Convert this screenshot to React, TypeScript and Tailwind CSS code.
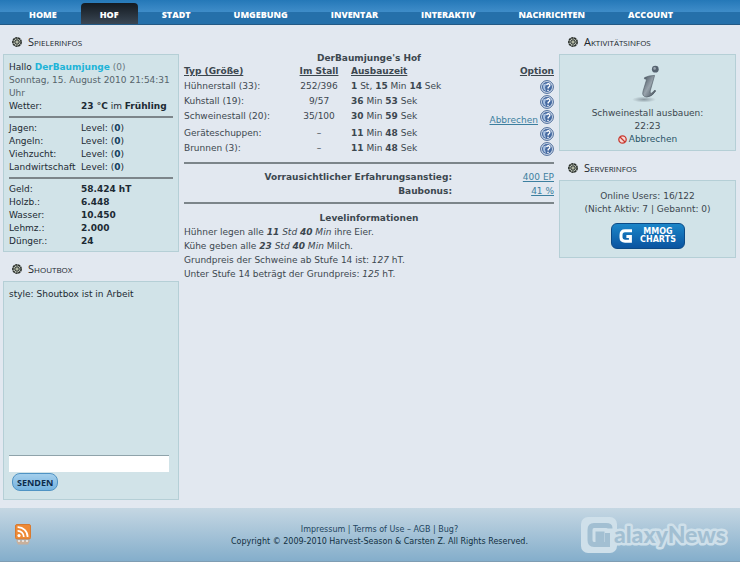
import type { ReactNode } from "react";

const navItems = ["Home", "Hof", "Stadt", "Umgebung", "Inventar", "Interaktiv", "Nachrichten", "Account"];

const stables = [
  { name: "Hühnerstall (33):", stock: "252/396", time: [["1", "St,"], ["15", "Min"], ["14", "Sek"]] },
  { name: "Kuhstall (19):", stock: "9/57", time: [["36", "Min"], ["53", "Sek"]] },
  { name: "Schweinestall (20):", stock: "35/100", time: [["30", "Min"], ["59", "Sek"]], cancel: true },
  { name: "Geräteschuppen:", stock: "–", time: [["11", "Min"], ["48", "Sek"]] },
  { name: "Brunnen (3):", stock: "–", time: [["11", "Min"], ["48", "Sek"]] },
];

const skills = ["Jagen:", "Angeln:", "Viehzucht:", "Landwirtschaft"];

const goods = [
  ["Geld:", "58.424 hT"],
  ["Holzb.:", "6.448"],
  ["Wasser:", "10.450"],
  ["Lehmz.:", "2.000"],
  ["Dünger.:", "24"],
];

function Ornament() {
  return (
    <svg viewBox="0 0 10 10" className="size-[10px]" aria-hidden="true">
      <circle cx="5" cy="5" r="4.2" fill="#c9cfc4" stroke="#2b302b" strokeWidth="1.5" strokeDasharray="2.4 .5" />
      <path d="M5 1v8M1 5h8M2.2 2.2l5.6 5.6M7.8 2.2L2.2 7.8" stroke="#3a403a" strokeWidth=".8" />
      <circle cx="5" cy="5" r="2.2" fill="none" stroke="#3a403a" strokeWidth=".8" />
      <circle cx="5" cy="5" r="1" fill="#d8dcc0" />
    </svg>
  );
}

function PanelTitle({ children }: { children: ReactNode }) {
  return (
    <h2 className="flex h-[29px] items-center gap-[6px] pt-1 pl-[9px] font-['Open_Sans',sans-serif] text-[11px] text-[#20262c] [font-variant:small-caps]">
      <Ornament />
      {children}
    </h2>
  );
}

function HelpIcon() {
  return (
    <svg viewBox="0 0 14 14" className="size-[14px]" aria-hidden="true">
      <circle cx="7" cy="7" r="6.4" fill="#d5e0ee" stroke="#38598c" strokeWidth=".9" />
      <circle cx="7" cy="7" r="5" fill="#4468a0" />
      <path d="M3.4 4.2Q2.4 7 3.8 9.8L6 11 5 7.6 6.4 3.6Z" fill="#a9c1e0" />
      <path d="M6.6 5.2Q7 3.6 8.6 3.8 10.2 4.2 9.8 5.8 9.4 6.8 8.2 7.4V8.6M8 9.8V11" fill="none" stroke="#fff" strokeWidth="1.4" />
    </svg>
  );
}

function InfoIcon() {
  return (
    <svg viewBox="0 0 32 38" className="h-[38px] w-8" role="img" aria-label="Info">
      <defs>
        <linearGradient id="steel" x1="0" y1="0" x2="1" y2="1">
          <stop offset="0" stopColor="#3f4b57" />
          <stop offset=".5" stopColor="#98a3ac" />
          <stop offset="1" stopColor="#3b4652" />
        </linearGradient>
        <radialGradient id="shade">
          <stop offset="0" stopColor="#8d9ba3" />
          <stop offset="1" stopColor="#8d9ba3" stopOpacity="0" />
        </radialGradient>
      </defs>
      <ellipse cx="12" cy="34.5" rx="12" ry="3" fill="url(#shade)" />
      <circle cx="23.3" cy="4.2" r="3.4" fill="#566370" />
      <circle cx="22.6" cy="3.4" r="1.3" fill="#9aa6b0" />
      <path d="M12.6 12.6Q17 10.4 22.6 10.4L18.2 26Q17.6 28.8 19.4 28.2 21.4 27 22.8 25L23.8 26Q20 32 14.8 32 9.6 31.6 11 26.4L14.6 14.4 12.4 13.8Z" fill="url(#steel)" stroke="#4b5762" strokeWidth=".6" />
    </svg>
  );
}

function FeedIcon() {
  return (
    <svg viewBox="0 0 16 22" className="h-[22px] w-4" aria-hidden="true">
      <rect x=".5" y=".5" width="15" height="14.5" rx="1.5" fill="#ee8a35" stroke="#d77a30" />
      <circle cx="4" cy="11.6" r="1.6" fill="#fff" />
      <path d="M2.6 6.8A6 6 0 0 1 8.8 13M2.6 3.2A9.6 9.6 0 0 1 12.6 13" fill="none" stroke="#fff" strokeWidth="1.7" />
      <path d="M1 16.5H15L13 20.5H3Z" fill="#e9a876" opacity=".6" />
      <path d="M3 17h2M7 17h2M11 17h2" stroke="#fff" strokeWidth="1.5" opacity=".8" />
    </svg>
  );
}

function GalaxyNews() {
  return (
    <svg viewBox="0 0 152 38" className="h-[38px] w-[152px]" role="img" aria-label="GalaxyNews">
      <rect x="1" y="1" width="36" height="36" rx="7" fill="#cfe0ea" />
      <g fontFamily="Lato, sans-serif" fontWeight="900" fontSize="23">
        <text x="34" y="27" fill="#a2bfd2" stroke="#cfe0ea" strokeWidth="5" strokeLinejoin="round" paintOrder="stroke">
          alaxyNews
        </text>
      </g>
      <path d="M30 12.5V12Q30 9.5 26 9.5H14Q10 9.5 10 14V24Q10 28.5 14 28.5H18V18H22V28.5H27.5V17" fill="none" stroke="#a2bfd2" strokeWidth="5" />
    </svg>
  );
}

function Rule() {
  return <hr className="h-[2px] border-0 bg-[#7c858a]" />;
}

const panel = "border border-[#b5cfd6] bg-[#d1e3e8]";

export default function App() {
  return (
    <div className="flex min-h-screen flex-col bg-[#e2e8f0] font-['DejaVu_Sans',sans-serif] text-[9px] leading-[13px] text-[#3c474f]">
      <nav className="flex h-[25px] items-end gap-[5px] border-b border-[#225985] bg-linear-to-b from-[#2478b8] from-0% via-[#3f8dc9] via-50% to-[#2570aa] to-50% pl-[10px]">
        {navItems.map((item) => (
          <a
            key={item}
            href="#"
            className={`px-[19px] pt-[5px] pb-[3px] font-['Open_Sans',sans-serif] font-extrabold text-white uppercase ${
              item === "Hof" ? "rounded-t-sm bg-linear-to-b from-[#141b22] to-[#3a4754]" : ""
            }`}
          >
            {item}
          </a>
        ))}
      </nav>

      <div className="flex flex-1 items-start gap-[5px] pr-1 pb-2 pl-[3px]">
        <aside className="w-44 shrink-0">
          <PanelTitle>Spielerinfos</PanelTitle>
          <section className={`${panel} px-[5px] pt-[6px] pb-[3px] text-[#1c2a33]`}>
            <p>
              Hallo{" "}
              <a href="#" className="font-bold text-[#20b4d8]">
                DerBaumjunge
              </a>{" "}
              <span className="text-[#6a7880]">(0)</span>
            </p>
            <p className="text-[#56636b]">Sonntag, 15. August 2010 21:54:31 Uhr</p>
            <p className="flex">
              <span className="w-[72px]">Wetter:</span>
              <span>
                <b>23 °C</b> im <b>Frühling</b>
              </span>
            </p>
            <div className="pt-[3px] pb-1">
              <Rule />
            </div>
            <table>
              <tbody>
                {skills.map((s) => (
                  <tr key={s}>
                    <td className="w-[72px]">{s}</td>
                    <td>
                      Level: (<b className="text-[#12405f]">0</b>)
                    </td>
                  </tr>
                ))}
              </tbody>
            </table>
            <div className="pt-[3px] pb-1">
              <Rule />
            </div>
            <table>
              <tbody>
                {goods.map(([label, amount]) => (
                  <tr key={label}>
                    <td className="w-[72px]">{label}</td>
                    <td className="font-bold">{amount}</td>
                  </tr>
                ))}
              </tbody>
            </table>
          </section>

          <PanelTitle>Shoutbox</PanelTitle>
          <section className={`${panel} px-[5px] pt-[6px] pb-2 text-[#1c2a33]`}>
            <p className="h-[167px]">style: Shoutbox ist in Arbeit</p>
            <form>
              <input
                aria-label="Nachricht"
                className="block h-[17px] w-[160px] border-t border-[#8fa3aa] bg-white px-1 outline-none"
              />
              <button
                type="button"
                className="mt-px ml-[3px] h-[18px] rounded-lg border border-[#4f93c4] bg-linear-to-b from-[#a4cfec] to-[#74b2df] px-1 font-['Noto_Sans',sans-serif] font-bold text-[#0d2c4c] uppercase"
              >
                Senden
              </button>
            </form>
          </section>
        </aside>

        <main className="min-w-0 flex-1 pt-[27px]">
          <h1 className="text-center font-bold">DerBaumjunge's Hof</h1>
          <table className="w-full">
            <thead>
              <tr className="text-left underline">
                <th className="w-[107px] pb-[2px]">Typ (Größe)</th>
                <th className="w-[56px] pb-[2px] text-center">Im Stall</th>
                <th className="pb-[2px] pl-1">Ausbauzeit</th>
                <th className="pb-[2px] text-right">Option</th>
              </tr>
            </thead>
            <tbody>
              {stables.map((row) => (
                <tr key={row.name} className="align-top">
                  <td className="pb-[2px]">{row.name}</td>
                  <td className="pb-[2px] text-center">{row.stock}</td>
                  <td className="pb-[2px] pl-1">
                    {row.time.map(([n, unit]) => (
                      <span key={unit}>
                        <b>{n}</b> {unit}{" "}
                      </span>
                    ))}
                  </td>
                  <td>
                    <div className="flex justify-end gap-[2px]">
                      {row.cancel && (
                        <a href="#" className="pt-1 text-[#3d7f9f] underline">
                          Abbrechen
                        </a>
                      )}
                      <a href="#" aria-label="Hilfe">
                        <HelpIcon />
                      </a>
                    </div>
                  </td>
                </tr>
              ))}
            </tbody>
          </table>
          <div className="pt-[5px] pb-[6px]">
            <Rule />
          </div>
          <table className="w-full leading-[14px]">
            <tbody className="text-right">
              <tr>
                <th>Vorrausichtlicher Erfahrungsanstieg:</th>
                <td className="w-[102px]">
                  <a href="#" className="text-[#3d7f9f] underline">400 EP</a>
                </td>
              </tr>
              <tr>
                <th>Baubonus:</th>
                <td>
                  <a href="#" className="text-[#3d7f9f] underline">41 %</a>
                </td>
              </tr>
            </tbody>
          </table>
          <div className="pt-1 pb-[7px]">
            <Rule />
          </div>
          <h2 className="text-center leading-[14px] font-bold">Levelinformationen</h2>
          <div className="leading-[14px]">
            <p>
              Hühner legen alle <i><b>11</b> Std <b>40</b> Min</i> ihre Eier.
            </p>
            <p>
              Kühe geben alle <i><b>23</b> Std <b>40</b> Min</i> Milch.
            </p>
            <p>
              Grundpreis der Schweine ab Stufe 14 ist: <i>127</i> hT.
            </p>
            <p>
              Unter Stufe 14 beträgt der Grundpreis: <i>125</i> hT.
            </p>
          </div>
        </main>

        <aside className="w-[177px] shrink-0 text-center">
          <PanelTitle>Aktivitätsinfos</PanelTitle>
          <section className={`${panel} flex flex-col items-center pt-[10px] pb-1`}>
            <InfoIcon />
            <p className="pt-1">Schweinestall ausbauen:</p>
            <p>22:23</p>
            <a href="#" className="flex items-center gap-[2px] text-[#2b5568]">
              <svg viewBox="0 0 9 9" className="size-[9px]" aria-hidden="true">
                <circle cx="4.5" cy="4.5" r="3.7" fill="#f4d9d6" stroke="#c8392f" strokeWidth="1.3" />
                <path d="M2 2l5 5" stroke="#c8392f" strokeWidth="1.3" />
              </svg>
              Abbrechen
            </a>
          </section>

          <PanelTitle>Serverinfos</PanelTitle>
          <section className={`${panel} flex flex-col items-center pt-[9px] pb-2`}>
            <p>Online Users: 16/122</p>
            <p>(Nicht Aktiv: 7 | Gebannt: 0)</p>
            <a
              href="#"
              className="mt-[7px] flex h-[26px] w-[74px] items-center justify-center gap-[7px] rounded-md border border-[#0b4a86] bg-linear-to-b from-[#1c86c8] to-[#0b54a0] text-white"
            >
              <svg viewBox="0 0 14 14" className="size-[14px]" aria-hidden="true">
                <path d="M13 1.8H6Q2 1.8 2 6V8.6Q2 12.2 6 12.2H11.4V7.4H7.4" fill="none" stroke="#fff" strokeWidth="3" />
              </svg>
              <span className="text-[8px] leading-[8px] font-bold">
                MMOG
                <br />
                CHARTS
              </span>
            </a>
          </section>
        </aside>
      </div>

      <footer className="flex h-[54px] items-center justify-between border-b border-[#7f9db3] bg-linear-to-b from-[#c5d7e3] to-[#84aecb] pr-[8px] pl-[15px] text-[8px] leading-3 text-[#1e4560]">
        <a href="#" aria-label="RSS" className="w-[164px]">
          <FeedIcon />
        </a>
        <div className="pt-[2px] text-center">
          <p>
            <a href="#">Impressum</a> | <a href="#">Terms of Use</a> – <a href="#">AGB</a> | <a href="#">Bug?</a>
          </p>
          <p className="text-[#12303f]">Copyright © 2009-2010 Harvest-Season &amp; Carsten Z. All Rights Reserved.</p>
        </div>
        <GalaxyNews />
      </footer>
    </div>
  );
}
